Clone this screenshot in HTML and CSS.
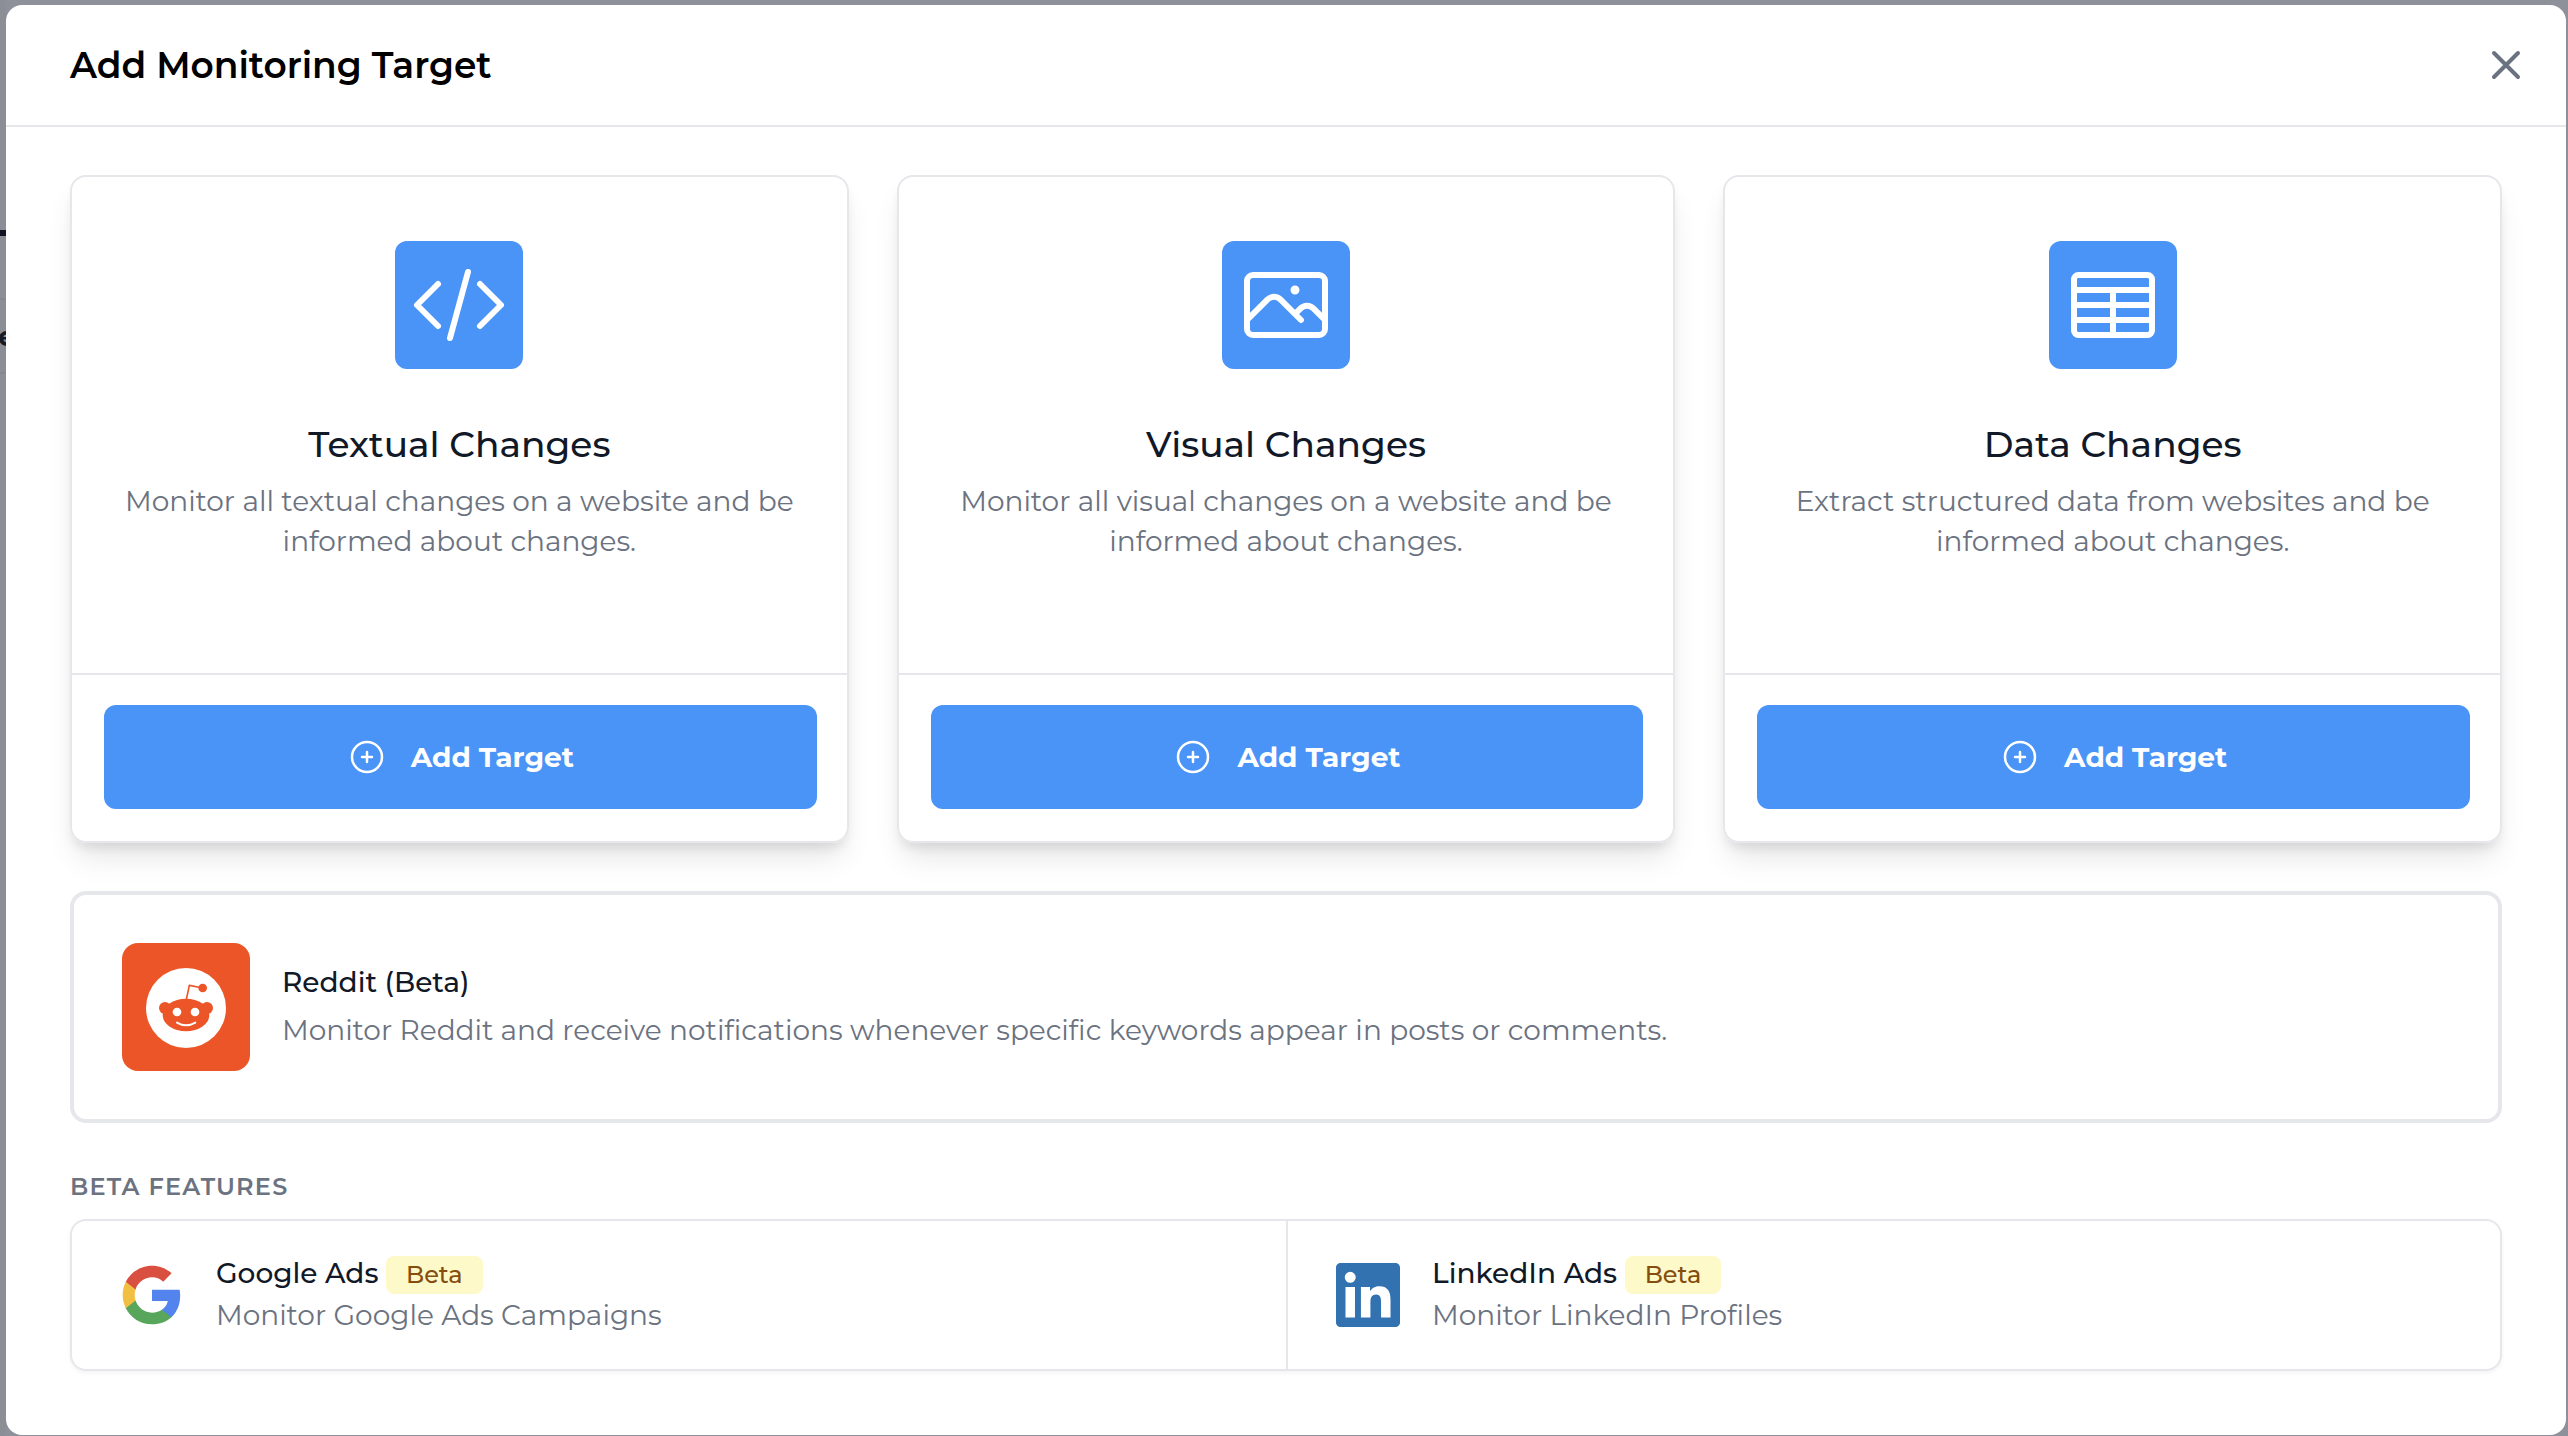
FILE: index.html
```html
<!DOCTYPE html>
<html lang="en">
<head>
<meta charset="utf-8">
<title>Add Monitoring Target</title>
<meta name="viewport" content="width=device-width, initial-scale=1">
<link rel="stylesheet" href="styles.css">
</head>
<body>
<div class="page-behind" aria-hidden="true">
  <span class="behind-mark"></span>
  <span class="behind-line behind-line-upper"></span>
  <span class="behind-label">e</span>
  <span class="behind-line behind-line-lower"></span>
</div>
<div class="modal" role="dialog" aria-modal="true" aria-labelledby="modal-title">
  <header class="modal-header">
    <h1 class="modal-title" id="modal-title">Add Monitoring Target</h1>
    <button class="close-button" type="button" aria-label="Close">
      <svg class="close-icon" viewBox="0 0 24 24" fill="none" stroke="currentColor" stroke-width="2" stroke-linecap="round"><path d="M6 18L18 6M6 6l12 12"/></svg>
    </button>
  </header>
  <main class="modal-body">
    <section class="targets">
      <article class="target-card">
        <div class="target-info">
          <span class="target-icon"><svg class="outline-icon" viewBox="0 0 24 24"><path d="M17.25 6.75L22.5 12l-5.25 5.25m-10.5 0L1.5 12l5.25-5.25m7.5-3l-4.5 16.5"/></svg></span>
          <h2 class="target-title">Textual Changes</h2>
          <p class="description">Monitor all textual changes on a website and be informed about changes.</p>
        </div>
        <div class="target-footer">
          <button class="add-button" type="button"><svg class="add-icon" viewBox="0 0 24 24"><path d="M12 9v6m3-3H9m12 0a9 9 0 1 1-18 0 9 9 0 0 1 18 0Z"/></svg>Add Target</button>
        </div>
      </article>
      <article class="target-card">
        <div class="target-info">
          <span class="target-icon"><svg class="outline-icon" viewBox="0 0 24 24"><path d="m2.25 15.75 5.159-5.159a2.25 2.25 0 0 1 3.182 0l5.159 5.159m-1.5-1.5 1.409-1.409a2.25 2.25 0 0 1 3.182 0l2.909 2.909m-18 3.75h16.5a1.5 1.5 0 0 0 1.5-1.5V6a1.5 1.5 0 0 0-1.5-1.5H3.75A1.5 1.5 0 0 0 2.25 6v12a1.5 1.5 0 0 0 1.5 1.5Zm10.5-11.25h.008v.008h-.008V8.25Zm.375 0a.375.375 0 1 1-.75 0 .375.375 0 0 1 .75 0Z"/></svg></span>
          <h2 class="target-title">Visual Changes</h2>
          <p class="description">Monitor all visual changes on a website and be informed about changes.</p>
        </div>
        <div class="target-footer">
          <button class="add-button" type="button"><svg class="add-icon" viewBox="0 0 24 24"><path d="M12 9v6m3-3H9m12 0a9 9 0 1 1-18 0 9 9 0 0 1 18 0Z"/></svg>Add Target</button>
        </div>
      </article>
      <article class="target-card">
        <div class="target-info">
          <span class="target-icon"><svg class="outline-icon" viewBox="0 0 24 24"><rect x="2.25" y="4.5" width="19.5" height="15" rx="1.1"/><path d="M2.25 8.25h19.5M2.25 12h19.5M2.25 15.75h19.5M12 8.25V19.5"/></svg></span>
          <h2 class="target-title">Data Changes</h2>
          <p class="description">Extract structured data from websites and be informed about changes.</p>
        </div>
        <div class="target-footer">
          <button class="add-button" type="button"><svg class="add-icon" viewBox="0 0 24 24"><path d="M12 9v6m3-3H9m12 0a9 9 0 1 1-18 0 9 9 0 0 1 18 0Z"/></svg>Add Target</button>
        </div>
      </article>
    </section>

    <section class="reddit-card">
      <svg class="reddit-icon" viewBox="0 0 384 384">
        <rect width="384" height="384" rx="48" fill="#ec5528"/>
        <circle cx="192" cy="195" r="120" fill="#fff"/>
        <g fill="#ec5528">
          <circle cx="129" cy="195" r="18"/><circle cx="255" cy="195" r="18"/>
          <ellipse cx="192" cy="216" rx="70" ry="49"/>
          <circle cx="242" cy="135" r="13"/>
          <path d="M193 170L202 127L242 135" fill="none" stroke="#ec5528" stroke-width="5" stroke-linejoin="round"/>
        </g>
        <circle cx="165" cy="207" r="13" fill="#fff"/><circle cx="219" cy="207" r="13" fill="#fff"/>
        <path d="M165 239Q192 255 220 239" fill="none" stroke="#fff" stroke-width="6" stroke-linecap="round"/>
      </svg>
      <div class="reddit-text">
        <h2 class="item-title">Reddit (Beta)</h2>
        <p class="description">Monitor Reddit and receive notifications whenever specific keywords appear in posts or comments.</p>
      </div>
    </section>

    <h2 class="section-label">BETA FEATURES</h2>
    <section class="features">
      <article class="feature">
        <svg class="feature-icon" viewBox="0 0 24 24">
          <path fill="#5383ec" d="M22.56 12.25c0-.78-.07-1.53-.2-2.25H12v4.26h5.92c-.26 1.37-1.04 2.53-2.21 3.31v2.77h3.57c2.08-1.92 3.28-4.74 3.28-8.09z"/>
          <path fill="#58a55c" d="M12 23c2.97 0 5.46-.98 7.28-2.66l-3.57-2.77c-.98.66-2.23 1.06-3.71 1.06-2.86 0-5.29-1.93-6.16-4.53H2.18v2.84C3.99 20.53 7.7 23 12 23z"/>
          <path fill="#f1bf42" d="M5.84 14.09c-.22-.66-.35-1.36-.35-2.09s.13-1.43.35-2.09V7.07H2.18C1.43 8.55 1 10.22 1 12s.43 3.45 1.18 4.93l2.85-2.22.81-.62z"/>
          <path fill="#d95040" d="M12 5.38c1.62 0 3.06.56 4.21 1.64l3.15-3.15C17.45 2.09 14.97 1 12 1 7.7 1 3.99 3.47 2.18 7.07l3.66 2.84c.87-2.6 3.3-4.53 6.16-4.53z"/>
        </svg>
        <div class="feature-text">
          <h3 class="item-title">Google Ads <span class="badge">Beta</span></h3>
          <p class="description">Monitor Google Ads Campaigns</p>
        </div>
      </article>
      <article class="feature">
        <svg class="feature-icon" viewBox="0 0 24 24"><path fill="#3272b0" d="M20.447 20.452h-3.554v-5.569c0-1.328-.027-3.037-1.852-3.037-1.853 0-2.136 1.445-2.136 2.939v5.667H9.351V9h3.414v1.561h.046c.477-.9 1.637-1.85 3.37-1.85 3.601 0 4.267 2.37 4.267 5.455v6.286zM5.337 7.433a2.062 2.062 0 0 1-2.063-2.065 2.064 2.064 0 1 1 2.063 2.065zm1.782 13.019H3.555V9h3.564v11.452zM22.225 0H1.771C.792 0 0 .774 0 1.729v20.542C0 23.227.792 24 1.771 24h20.451C23.2 24 24 23.227 24 22.271V1.729C24 .774 23.2 0 22.222 0h.003z"/></svg>
        <div class="feature-text">
          <h3 class="item-title">LinkedIn Ads <span class="badge">Beta</span></h3>
          <p class="description">Monitor LinkedIn Profiles</p>
        </div>
      </article>
    </section>
  </main>
</div>
</body>
</html>
```
FILE: styles.css
```css
* {
  box-sizing: border-box;
}

body {
  margin: 0;
  padding: 5px 2px 1px 6px;
  min-height: 100vh;
  background: #8e9199;
  font-family: Montserrat, Inter, sans-serif;
  font-size: 28px;
  line-height: 40px;
  color: #111827;
}

h1,
h2,
h3,
p {
  margin: 0;
}

svg {
  display: block;
  flex: none;
}

/* Slice of the dimmed page that shows left of the dialog */
.page-behind {
  position: absolute;
  top: 0;
  left: 0;
  width: 6px;
  height: 100%;
  overflow: hidden;
  background: #8b8e95;
}

.behind-mark,
.behind-line,
.behind-label {
  position: absolute;
  left: 0;
}

.behind-mark {
  top: 230px;
  width: 6px;
  height: 6px;
  background: #111420;
}

.behind-line {
  width: 6px;
  height: 2px;
  background: #84878e;
}

.behind-line-upper {
  top: 298px;
}

.behind-line-lower {
  top: 372px;
}

.behind-label {
  top: 316px;
  left: -2px;
  font-weight: 700;
  color: #161a26;
}

.modal {
  position: relative;
  background: #fff;
  border-radius: 16px;
}

.modal-header {
  display: flex;
  align-items: center;
  justify-content: space-between;
  height: 122px;
  padding: 0 36px 0 64px;
  border-bottom: 2px solid #e5e7eb;
}

.modal-title {
  font-size: 36px;
  line-height: 56px;
  font-weight: 600;
  color: #000;
}

.close-button {
  padding: 0;
  border: 0;
  background: none;
  color: #6b7280;
}

.close-icon {
  width: 48px;
  height: 48px;
}

.modal-body {
  padding: 48px 64px 64px;
}

.targets {
  display: grid;
  grid-template-columns: repeat(3, 1fr);
  gap: 48px;
}

.target-card {
  border: 2px solid #e5e7eb;
  border-radius: 16px;
  box-shadow: 0 20px 30px -6px rgba(0, 0, 0, 0.1), 0 8px 12px -4px rgba(0, 0, 0, 0.1);
}

.target-info {
  display: flex;
  flex-direction: column;
  align-items: center;
  padding: 64px 48px 112px;
  text-align: center;
}

.target-icon {
  display: flex;
  align-items: center;
  justify-content: center;
  width: 128px;
  height: 128px;
  margin-bottom: 48px;
  border-radius: 12px;
  background: #4a93f7;
}

.outline-icon,
.add-icon {
  fill: none;
  stroke: #fff;
  stroke-width: 1.5;
  stroke-linecap: round;
  stroke-linejoin: round;
}

.outline-icon {
  width: 96px;
  height: 96px;
}

.target-title {
  margin-bottom: 10px;
  font-size: 36px;
  line-height: 54px;
  font-weight: 500;
}

.description {
  color: #6b7280;
}

.target-footer {
  padding: 30px 30px 32px 32px;
  border-top: 2px solid #e5e7eb;
}

.add-button {
  display: flex;
  align-items: center;
  justify-content: center;
  gap: 24px;
  width: 100%;
  height: 104px;
  padding: 0;
  border: 0;
  border-radius: 12px;
  background: #4a93f7;
  color: #fff;
  font: inherit;
  font-weight: 700;
}

.add-icon {
  width: 40px;
  height: 40px;
}

.reddit-card {
  display: flex;
  align-items: center;
  gap: 32px;
  margin-top: 48px;
  padding: 48px;
  border: 4px solid #e5e7eb;
  border-radius: 16px;
}

.reddit-icon {
  width: 128px;
  height: 128px;
}

.reddit-text {
  display: grid;
  gap: 8px;
  padding-bottom: 2px;
}

.item-title {
  font-size: 28px;
  font-weight: 500;
}

.section-label {
  margin: 44px 0 12px;
  font-size: 24px;
  font-weight: 600;
  letter-spacing: 0.05em;
  color: #6b7280;
}

.features {
  display: grid;
  grid-template-columns: repeat(2, 1fr);
  border: 2px solid #e5e7eb;
  border-radius: 16px;
  box-shadow: 0 2px 4px rgba(0, 0, 0, 0.05);
}

.feature {
  display: flex;
  align-items: center;
  gap: 32px;
  padding: 30px 48px;
}

.feature + .feature {
  border-left: 2px solid #e5e7eb;
}

.feature-icon {
  width: 64px;
  height: 64px;
}

.feature-text {
  padding-bottom: 4px;
}

.feature-text .item-title {
  line-height: 44px;
}

.badge {
  display: inline-block;
  padding: 0 20px;
  border-radius: 8px;
  background: #fef9c8;
  color: #854d0e;
  font-size: 24px;
  line-height: 38px;
}
```
